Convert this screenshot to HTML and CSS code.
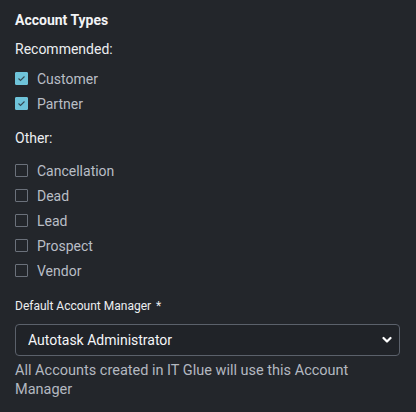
FILE: index.html
```html
<!DOCTYPE html>
<html lang="en">
<head>
  <meta charset="UTF-8">
  <meta name="viewport" content="width=device-width, initial-scale=1.0">
  <title>Account Types</title>
  <link rel="stylesheet" href="styles.css">
</head>
<body>

<div class="panel">
  <h3 class="title">Account Types</h3>

  <p class="group-label">Recommended:</p>
  <div class="checks">
    <label class="check"><input type="checkbox" checked><span>Customer</span></label>
    <label class="check"><input type="checkbox" checked><span>Partner</span></label>
  </div>

  <p class="group-label other">Other:</p>
  <div class="checks">
    <label class="check"><input type="checkbox"><span>Cancellation</span></label>
    <label class="check"><input type="checkbox"><span>Dead</span></label>
    <label class="check"><input type="checkbox"><span>Lead</span></label>
    <label class="check"><input type="checkbox"><span>Prospect</span></label>
    <label class="check"><input type="checkbox"><span>Vendor</span></label>
  </div>

  <label class="field-label" for="manager">Default Account Manager <span class="req">*</span></label>
  <div class="select-wrap">
    <select id="manager" class="select">
      <option>Autotask Administrator</option>
    </select>
    <svg class="chevron" width="10" height="8" viewBox="0 0 10 8"><path d="M1.5 2 L5 5.5 L8.5 2" fill="none" stroke="#fff" stroke-width="2.2" stroke-linecap="round" stroke-linejoin="round"/></svg>
  </div>
  <p class="help">All Accounts created in IT Glue will use this Account Manager</p>
</div>

</body>
</html>
```

FILE: styles.css
```css
body {
  margin: 0;
  background-color: #23262b;
  font-family: Roboto, "Liberation Sans", Arial, sans-serif;
  color: #c3c7ce;
}
.panel {
  padding: 12px 16px 0 15px;
  display: flex;
  flex-direction: column;
}
.title {
  margin: 0;
  font-size: 14px;
  line-height: 16px;
  font-weight: 700;
  color: #f2f3f5;
}
.group-label {
  margin: 13px 0 0 0;
  font-size: 14px;
  line-height: 16px;
  font-weight: 400;
  color: #eceef1;
}
.group-label.other {
  margin-top: 14px;
}
.checks {
  margin-top: 9px;
  display: flex;
  flex-direction: column;
}
.group-label.other + .checks {
  margin-top: 12px;
}
.check {
  display: flex;
  align-items: center;
  height: 25px;
  font-size: 14px;
  color: #b9bec6;
}
.check input {
  appearance: none;
  -webkit-appearance: none;
  margin: 0 9px 0 0;
  width: 13px;
  height: 13px;
  border: 1px solid #6b717b;
  border-radius: 1px;
  background: transparent;
  box-sizing: border-box;
  flex: none;
}
.check input:checked {
  border-color: #6ec3d9;
  background: #6ec3d9 url("data:image/svg+xml,%3Csvg xmlns='http://www.w3.org/2000/svg' width='13' height='13' viewBox='0 0 13 13'%3E%3Cpath d='M3.5 6.5 L5.5 8.5 L9.5 4.5' fill='none' stroke='%23344a55' stroke-width='1.1'/%3E%3C/svg%3E") no-repeat center;
}
.field-label {
  margin-top: 16px;
  font-size: 12px;
  line-height: 14px;
  font-weight: 400;
  color: #eceef1;
}
.req {
  margin-left: 2px;
}
.select-wrap {
  position: relative;
  margin-top: 11px;
}
.select {
  appearance: none;
  -webkit-appearance: none;
  width: 100%;
  height: 32px;
  box-sizing: border-box;
  border: 1px solid #5b616b;
  border-radius: 4px;
  background: #202328;
  color: #f5f6f8;
  font-family: inherit;
  font-size: 14px;
  font-weight: 400;
  padding: 0 12px;
}
.chevron {
  position: absolute;
  right: 8px;
  top: 12px;
  pointer-events: none;
}
.help {
  margin: 5px 0 0 0;
  font-size: 14.5px;
  line-height: 19px;
  color: #b3b8c0;
}
```
